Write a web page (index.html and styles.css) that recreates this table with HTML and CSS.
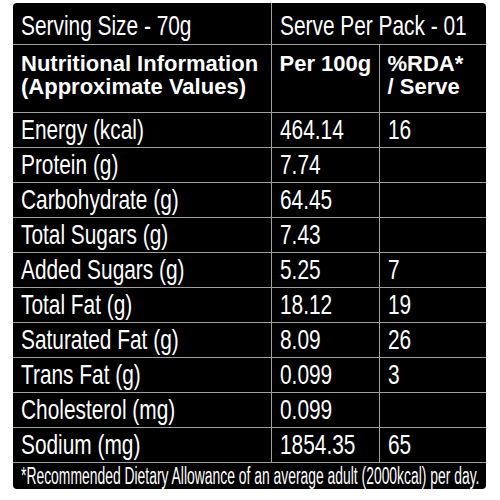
FILE: index.html
```html
<!DOCTYPE html>
<html lang="en">
<head>
    <meta charset="UTF-8">
    <meta name="viewport" content="width=device-width, initial-scale=1.0">
    <title>Nutritional Information</title>
    <link rel="stylesheet" href="styles.css">
</head>
<body>

<div class="etiqueta">
    <table class="tabla-nutri">
        <colgroup>
            <col class="col-nombre">
            <col class="col-valor">
            <col class="col-rda">
        </colgroup>
        <tr class="fila-porcion">
            <td><span class="c">Serving Size - 70g</span></td>
            <td colspan="2"><span class="c">Serve Per Pack - 01</span></td>
        </tr>
        <tr class="fila-titulo">
            <th>Nutritional Information<br>(Approximate Values)</th>
            <th>Per 100g</th>
            <th>%RDA*<br>/ Serve</th>
        </tr>
        <tr><td><span class="c">Energy (kcal)</span></td><td><span class="c">464.14</span></td><td><span class="c">16</span></td></tr>
        <tr><td><span class="c">Protein (g)</span></td><td><span class="c">7.74</span></td><td></td></tr>
        <tr><td><span class="c">Carbohydrate (g)</span></td><td><span class="c">64.45</span></td><td></td></tr>
        <tr><td><span class="c">Total Sugars (g)</span></td><td><span class="c">7.43</span></td><td></td></tr>
        <tr><td><span class="c">Added Sugars (g)</span></td><td><span class="c">5.25</span></td><td><span class="c">7</span></td></tr>
        <tr><td><span class="c">Total Fat (g)</span></td><td><span class="c">18.12</span></td><td><span class="c">19</span></td></tr>
        <tr><td><span class="c">Saturated Fat (g)</span></td><td><span class="c">8.09</span></td><td><span class="c">26</span></td></tr>
        <tr><td><span class="c">Trans Fat (g)</span></td><td><span class="c">0.099</span></td><td><span class="c">3</span></td></tr>
        <tr><td><span class="c">Cholesterol (mg)</span></td><td><span class="c">0.099</span></td><td></td></tr>
        <tr><td><span class="c">Sodium (mg)</span></td><td><span class="c">1854.35</span></td><td><span class="c">65</span></td></tr>
        <tr class="fila-nota">
            <td colspan="3"><span class="nota">*Recommended Dietary Allowance of an average adult (2000kcal) per day.</span></td>
        </tr>
    </table>
</div>

</body>
</html>
```

FILE: styles.css
```css
body {
    margin: 0;
    background: white;
    font-family: "Liberation Sans", Arial, sans-serif;
}

.etiqueta {
    width: 473px;
    margin: 3px 0 0 13px;
    background: black;
    border-radius: 4px;
    overflow: hidden;
}

.tabla-nutri {
    width: 100%;
    border-collapse: collapse;
    table-layout: fixed;
    color: white;
}

.col-nombre { width: 258px; }
.col-valor { width: 108px; }
.col-rda { width: 107px; }

.tabla-nutri td,
.tabla-nutri th {
    box-sizing: border-box;
    border: 1px solid #a0a0a0;
    padding: 0 0 0 8px;
    text-align: left;
    white-space: nowrap;
}

.tabla-nutri tr:first-child td { border-top: none; }
.tabla-nutri tr:last-child td { border-bottom: none; }
.tabla-nutri td:first-child,
.tabla-nutri th:first-child { border-left: none; }
.tabla-nutri td:last-child,
.tabla-nutri th:last-child { border-right: none; }

.tabla-nutri td {
    height: 35px;
    font-size: 28px;
    line-height: 33px;
    padding-bottom: 1px;
    vertical-align: middle;
}

/* letra condensada: Arial comprimida a lo ancho */
.c {
    display: inline-block;
    transform: scaleX(0.745);
    transform-origin: 0 50%;
}

.fila-porcion td {
    height: 41px;
    line-height: 37px;
    padding-top: 4px;
    padding-bottom: 0;
}

.fila-titulo th {
    height: 68px;
    font-size: 22px;
    font-weight: bold;
    line-height: 23px;
    vertical-align: top;
    padding-top: 7px;
}

.fila-nota td {
    height: 26px;
    line-height: 26px;
    font-size: 23px;
    padding-bottom: 0;
}

.nota {
    display: inline-block;
    transform: scaleX(0.604);
    transform-origin: 0 50%;
}
```
